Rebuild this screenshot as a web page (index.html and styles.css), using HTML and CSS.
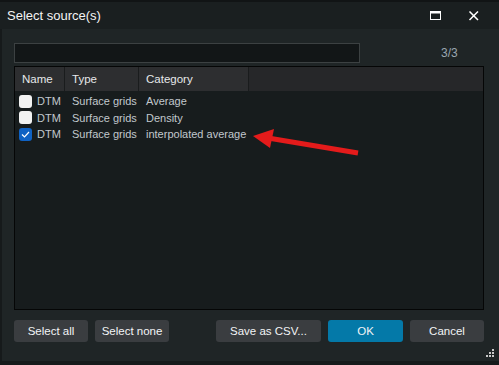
FILE: index.html
```html
<!DOCTYPE html>
<html lang="en">
<head>
    <meta charset="UTF-8">
    <title>Select source(s)</title>
    <link rel="stylesheet" href="styles.css">
</head>
<body>
    <div class="window">
        <div class="titlebar">
            <span class="title">Select source(s)</span>
            <span class="tb-btn">
                <svg width="12" height="10" viewBox="0 0 12 10"><rect x="0.5" y="0.5" width="10" height="8" fill="none" stroke="#fff"/><rect x="0" y="0" width="11" height="2.5" fill="#fff"/></svg>
            </span>
            <span class="tb-btn">
                <svg width="12" height="10" viewBox="0 0 12 10"><path d="M1.5 0.5 L10 9 M10 0.5 L1.5 9" stroke="#fff" stroke-width="1.5"/></svg>
            </span>
        </div>
        <div class="content">
            <div class="search-row">
                <div class="search"></div>
                <span class="count">3/3</span>
            </div>
            <div class="table">
                <div class="thead">
                    <div class="th c-name">Name</div>
                    <div class="th c-type">Type</div>
                    <div class="th c-cat">Category</div>
                </div>
                <div class="row">
                    <div class="c-name"><span class="check"></span>DTM</div>
                    <div class="c-type">Surface grids</div>
                    <div class="c-cat">Average</div>
                </div>
                <div class="row">
                    <div class="c-name"><span class="check"></span>DTM</div>
                    <div class="c-type">Surface grids</div>
                    <div class="c-cat">Density</div>
                </div>
                <div class="row">
                    <div class="c-name"><span class="check on"><svg width="9" height="7" viewBox="0 0 9 7"><path d="M1 3.5 L3.5 6 L8 1" fill="none" stroke="#fff" stroke-width="1.2"/></svg></span>DTM</div>
                    <div class="c-type">Surface grids</div>
                    <div class="c-cat">interpolated average</div>
                </div>
            </div>
            <div class="buttons">
                <button class="btn">Select all</button>
                <button class="btn">Select none</button>
                <span class="spacer"></span>
                <button class="btn wide">Save as CSV...</button>
                <button class="btn primary">OK</button>
                <button class="btn">Cancel</button>
            </div>
        </div>
        <svg class="arrow" width="499" height="365" viewBox="0 0 499 365">
            <path d="M358 153 L268 138" stroke="#e41b1b" stroke-width="5" stroke-linecap="butt"/>
            <path d="M253 136 L274 129 L270 148 Z" fill="#e41b1b"/>
        </svg>
        <svg class="grip" width="9" height="9" viewBox="0 0 9 9" fill="#c8c8c8">
            <rect x="6" y="0" width="2" height="2"/>
            <rect x="3" y="3" width="2" height="2"/><rect x="6" y="3" width="2" height="2"/>
            <rect x="0" y="6" width="2" height="2"/><rect x="3" y="6" width="2" height="2"/><rect x="6" y="6" width="2" height="2"/>
        </svg>
    </div>
</body>
</html>
```

FILE: styles.css
```css
body{
    margin:0;
    background:#161a1b;
    font:11px "Liberation Sans", Arial, sans-serif;
}
.window{
    position:relative;
    width:499px;
    height:365px;
    display:flex;
    flex-direction:column;
    background:#161a1b;
}
.titlebar{
    height:29px;
    display:flex;
    align-items:center;
    background:#1a1f20;
    border-top:2px solid #111415;
    box-sizing:border-box;
    padding:0 6px 0 7px;
}
.title{
    flex:1;
    color:#f4f4f4;
    font-size:13px;
}
.tb-btn{
    width:38px;
    display:flex;
    justify-content:center;
}
.content{
    flex:1;
    margin:0 0 4px 2px;
    background:#1f2526;
    padding:14px 15px 0 12px;
    display:flex;
    flex-direction:column;
}
.search-row{
    display:flex;
    align-items:center;
    height:20px;
}
.search{
    width:344px;
    height:18px;
    background:#121617;
    border:1px solid #3c4142;
}
.count{
    margin-left:81px;
    color:#9aa6b0;
    font-size:12px;
}
.table{
    margin-top:3px;
    height:242px;
    background:#171c1d;
    border:1px solid #050606;
    color:#c2c8cd;
}
.thead{
    display:flex;
    height:24px;
    background:#262729;
    color:#e6e8ea;
    font-size:11.5px;
}
.th{
    background:#2d2e30;
    border-right:1px solid #1a1c1d;
    display:flex;
    align-items:center;
    padding-left:7px;
    box-sizing:border-box;
}
.c-name{width:50px;flex-shrink:0;}
.c-type{width:74px;flex-shrink:0;}
.c-cat{width:110px;flex-shrink:0;}
.row{
    display:flex;
    align-items:center;
    height:16.5px;
}
.thead + .row{margin-top:2px;}
.row div{
    display:flex;
    align-items:center;
    box-sizing:border-box;
    padding-left:7px;
    white-space:nowrap;
}
.row .c-name{padding-left:4px;}
.check{
    width:13px;
    height:13px;
    border-radius:3px;
    background:#f2f2f2;
    margin-right:5px;
    display:flex;
    align-items:center;
    justify-content:center;
}
.check.on{
    background:#0f62c4;
}
.buttons{
    display:flex;
    margin-top:10px;
    gap:7px;
}
.spacer{flex:1;}
.btn{
    width:74px;
    height:22px;
    border:none;
    border-radius:3px;
    background:#3a3d40;
    color:#f2f4f6;
    font:11.5px "Liberation Sans", Arial, sans-serif;
    padding:0;
}
.btn.wide{width:105px;}
.btn.primary{background:#0479a8;width:75px;}
.arrow{
    position:absolute;
    left:0;
    top:0;
    pointer-events:none;
}
.grip{
    position:absolute;
    right:4px;
    bottom:7px;
}
```
